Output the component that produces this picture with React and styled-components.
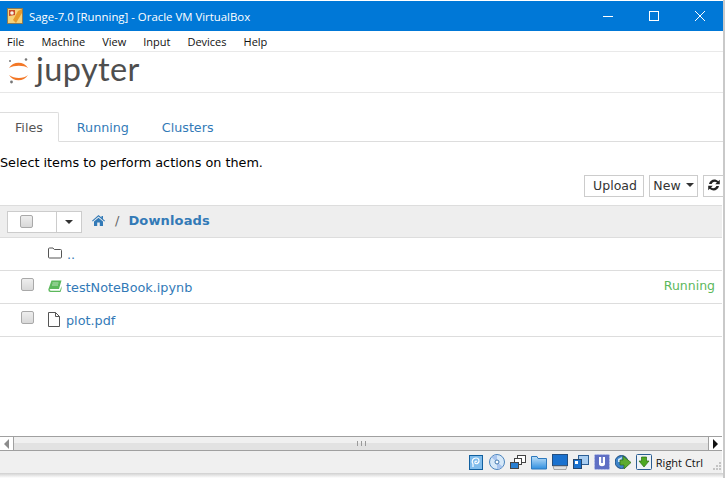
import React from 'react';
import styled, { createGlobalStyle } from 'styled-components';

const GlobalStyle = createGlobalStyle`
    html, body {
        margin: 0;
        padding: 0;
        background: #fff;
        overflow: hidden;
    }
    * {
        box-sizing: border-box;
    }
`

const Window = styled.div`
    width: 725px;
    height: 478px;
    display: flex;
    flex-direction: column;
    padding-top: 1px;
    background: #fff;
    font-family: "DejaVu Sans", sans-serif;
    border-right: 2px solid #c9c9c9;
`

const TitleBar = styled.div`
    height: 30px;
    flex: none;
    display: flex;
    align-items: center;
    background: #0078d7;
    color: #fff;
    font-family: "Open Sans", sans-serif;
    font-size: 11.4px;
    padding-left: 7px;
`

const TitleText = styled.span`
    margin-left: 6px;
    flex: 1;
`

const WinButton = styled.div`
    width: 46px;
    height: 30px;
    display: flex;
    align-items: center;
    justify-content: center;
`

const MenuBar = styled.div`
    height: 21px;
    flex: none;
    display: flex;
    align-items: center;
    gap: 17px;
    padding-left: 7px;
    font-family: "Open Sans", sans-serif;
    font-size: 11px;
    color: #111;
    border-bottom: 1px solid #e9e9e9;
`

const Logo = styled.div`
    height: 41px;
    flex: none;
    display: flex;
    align-items: center;
    padding-left: 8px;
    border-bottom: 1px solid #e7e7e7;
`

const LogoText = styled.span`
    font-family: "Lato", sans-serif;
    font-size: 32.5px;
    color: #4e4e4e;
    margin-left: 5px;
    position: relative;
    top: -4px;
    letter-spacing: 0.4px;
`

const Tabs = styled.div`
    margin-top: 19px;
    height: 30px;
    flex: none;
    display: flex;
    border-bottom: 1px solid #ddd;
    font-size: 12.7px;
`

const Tab = styled.div`
    height: 30px;
    display: flex;
    align-items: center;
    padding: ${p => p.$active ? '0 15px' : '0 16px 0 17px'};
    margin-right: ${p => p.$active ? '1px' : '0'};
    color: ${p => p.$active ? '#555' : '#337ab7'};
    ${p => p.$active && `
        background: #fff;
        border: 1px solid #ddd;
        border-left: none;
        border-bottom-color: #fff;
        border-radius: 0 2px 0 0;
    `}
`

const Hint = styled.div`
    margin-top: 12px;
    height: 17px;
    line-height: 17px;
    font-size: 12.8px;
    color: #000;
    flex: none;
`

const Toolbar = styled.div`
    margin: 4px -1px 0 0;
    height: 22px;
    flex: none;
    display: flex;
    justify-content: flex-end;
    gap: 5px;
`

const Button = styled.div`
    height: 22px;
    display: flex;
    align-items: center;
    justify-content: center;
    width: ${p => p.$w}px;
    padding: 0 0 2px ${p => p.$inset || 0}px;
    border: 1px solid #ccc;
    background: #fff;
    color: #333;
    font-size: 12.5px;
    gap: 5px;
`

const FileList = styled.div`
    margin: 8px 1px 0 0;
    flex: none;
    border-top: 1px solid #ddd;
`

const ListHeader = styled.div`
    height: 32px;
    display: flex;
    align-items: center;
    background: #eee;
    border-bottom: 1px solid #ddd;
    padding-left: 7px;
    font-size: 13px;
`

const SelectGroup = styled.div`
    width: 75px;
    height: 22px;
    display: flex;
    background: #fff;
    border: 1px solid #ccc;
`

const SelectMain = styled.div`
    width: 49px;
    display: flex;
    align-items: center;
    padding-left: 12px;
    border-right: 1px solid #ccc;
`

const SelectCaret = styled.div`
    flex: 1;
    display: flex;
    align-items: center;
    justify-content: center;
`

const Caret = styled.span`
    width: 0;
    height: 0;
    border-left: 4px solid transparent;
    border-right: 4px solid transparent;
    border-top: 4px solid #333;
`

const Check = styled.span`
    width: 13px;
    height: 13px;
    flex: none;
    border-radius: 2px;
    border: 1px solid #a9a9a9;
    background: linear-gradient(#eeeeee, #d8d8d8);
`

const Crumbs = styled.div`
    display: flex;
    align-items: center;
    margin-left: 10px;
    padding-bottom: 2px;
    color: #777;
`

const Separator = styled.span`
    margin: 0 9px 0 10px;
    color: #666;
`

const CrumbLink = styled.span`
    color: #337ab7;
    font-weight: bold;
    letter-spacing: 0.15px;
`

const Row = styled.div`
    height: 33px;
    display: flex;
    align-items: center;
    padding: 0 7px 0 21px;
    border-bottom: 1px solid #ddd;
    font-size: 12.8px;
    color: #337ab7;
`

const CheckSlot = styled.div`
    width: 27px;
    flex: none;
    display: flex;
    margin-top: -6px;
`

const IconSlot = styled.div`
    width: 18px;
    flex: none;
    display: flex;
    margin-top: -2px;
`

const FileName = styled.span`
    flex: 1;
    margin-top: 1px;
    margin-left: ${p => p.$parent ? '1px' : '0'};
`

const Status = styled.span`
    color: #5cb85c;
    font-size: 12.5px;
    margin-top: -3px;
`

const Filler = styled.div`
    flex: 1;
`

const Scrollbar = styled.div`
    height: 15px;
    flex: none;
    display: flex;
    margin-right: 1px;
    border-top: 1px solid #a0a0a0;
    border-bottom: 1px solid #a0a0a0;
    background: linear-gradient(#f0f0f0 50%, #e2e2e2 50%);
`

const ScrollEnd = styled.div`
    width: 14px;
    flex: none;
    display: flex;
    align-items: center;
    justify-content: center;
    background: #fff;
    border-${p => p.$side}: 1px solid #a0a0a0;
`

const Arrow = styled.span`
    width: 0;
    height: 0;
    border-top: 5px solid transparent;
    border-bottom: 5px solid transparent;
    ${p => p.$left ? 'border-right: 5px solid #8c8c8c;' : 'border-left: 5px solid #111;'}
`

const ScrollTrack = styled.div`
    flex: 1;
    display: flex;
    align-items: center;
    justify-content: center;
    gap: 3px;
`

const Grip = styled.span`
    width: 1px;
    height: 5px;
    background: #9a9a9a;
`

const StatusBar = styled.div`
    height: 22px;
    flex: none;
    display: flex;
    align-items: center;
    justify-content: flex-end;
    gap: 5px;
    padding-right: 1px;
    margin-right: 1px;
    background: #f0f0f0;
    font-family: "Open Sans", sans-serif;
    font-size: 11px;
    color: #111;
`

const HostKey = styled.span`
    margin-left: -1px;
`

const GripSlot = styled.div`
    margin: 6px 0 0 4px;
    display: flex;
`

const Shadow = styled.div`
    height: 5px;
    flex: none;
    background: linear-gradient(#cfcfcf, #fff);
`

const VboxLogo = () => (
    <svg width="16" height="16" viewBox="0 0 16 16">
        <rect x="0.5" y="0.5" width="15" height="15" fill="#f5d27a" stroke="#8a7a55" />
        <path d="M9 15 L15 5 L15 1 L11 3 L6 12Z" fill="#e79a2c" />
        <path d="M2 2 L8 2 L8 7 L2 8Z" fill="#c94a2a" />
        <circle cx="5" cy="5" r="1.8" fill="#f4f1ea" />
    </svg>
)

const JupyterMark = () => (
    <svg width="23" height="30" viewBox="0 0 23 30">
        <path d="M1 11 C5 4 16 4 20 11 C16 8 6 8 1 11Z" fill="#f37726" />
        <path d="M1 18 C5 25 16 25 20 18 C16 22 6 22 1 18Z" fill="#f37726" />
        <circle cx="18" cy="2.500" r="1.300" fill="#777" />
        <circle cx="2" cy="4" r="1" fill="#777" />
        <circle cx="3.500" cy="25" r="1.400" fill="#777" />
    </svg>
)

const HomeIcon = () => (
    <svg width="13" height="11" viewBox="0 0 13 11">
        <path d="M6.500 0 L9.500 2.600 V1 H11 V3.900 L13 5.700 L12.300 6.400 L6.500 1.500 L0.700 6.400 L0 5.700Z M2 6.500 L6.500 2.700 L11 6.500 V11 H7.800 V7.500 H5.200 V11 H2Z" fill="#337ab7" />
    </svg>
)

const FolderIcon = () => (
    <svg width="14" height="12" viewBox="0 0 14 12">
        <path d="M1.500 1 H5 L6.300 2.500 H12.500 Q13.500 2.500 13.500 3.500 V10 Q13.500 11 12.500 11 H1.500 Q0.500 11 0.500 10 V2 Q0.500 1 1.500 1Z" fill="none" stroke="#555" />
    </svg>
)

const BookIcon = () => (
    <svg width="14" height="12" viewBox="0 0 14 12">
        <path d="M3.500 0.500 H13.500 L11 9 H2.500 Q1.500 9 1.700 10 Q2 10.800 3 10.800 H12 L13.500 6 V9 L12.500 12 H2.500 Q0.300 12 0.300 9.500Z" fill="#5cb85c" />
        <path d="M4.500 3 H10.500 M4 5 H10" stroke="#d4edd4" strokeWidth="0.8" />
    </svg>
)

const PageIcon = () => (
    <svg width="12" height="15" viewBox="0 0 12 15">
        <path d="M0.500 0.500 H7.500 L11.500 4.500 V14.500 H0.500Z M7.500 0.500 V4.500 H11.500" fill="none" stroke="#555" />
    </svg>
)

const RefreshIcon = () => (
    <svg width="12" height="12" viewBox="0 0 11 11">
        <path d="M10.800 0.600 V4.800 H6.600 L8.200 3.200 C6.800 1.900 4.300 2.300 3.300 4.500 H0.900 C1.900 0.400 6.500 -0.900 9.400 2Z" fill="#222" />
        <path d="M0.200 10.400 V6.200 H4.400 L2.800 7.800 C4.200 9.100 6.700 8.700 7.700 6.500 H10.100 C9.100 10.600 4.500 11.900 1.600 9Z" fill="#222" />
    </svg>
)

const HddIcon = () => (
    <svg width="16" height="16" viewBox="0 0 16 16">
        <rect x="1.500" y="1.500" width="13" height="14" fill="#7fbcec" stroke="#12609f" />
        <path d="M5 13 V10 C3 7 5 4 8 4 C11 4 12 7 10 9 C9 10 7.500 10 7 9 C6.500 7.500 8 6.500 9 7.500" fill="none" stroke="#fff" strokeWidth="1.200" />
    </svg>
)

const CdIcon = () => (
    <svg width="16" height="16" viewBox="0 0 16 16">
        <circle cx="8" cy="8" r="7.500" fill="#d6e8f8" stroke="#4b84bd" />
        <path d="M8 8 L2.500 3.500 A7 7 0 0 1 8 1Z M8 8 L13.500 12.500 A7 7 0 0 1 8 15Z" fill="#a8c4ee" />
        <circle cx="8" cy="8" r="2" fill="#fff" stroke="#3f76ae" />
    </svg>
)

const NetIcon = () => (
    <svg width="16" height="16" viewBox="0 0 16 16">
        <rect x="7.500" y="1.500" width="8" height="7" fill="#fff" stroke="#444" />
        <rect x="4.500" y="4.500" width="7" height="6" fill="#fff" stroke="#444" />
        <rect x="0.500" y="8.500" width="8" height="6" fill="#2a7fd0" stroke="#444" />
    </svg>
)

const SharedIcon = () => (
    <svg width="16" height="16" viewBox="0 0 16 16">
        <defs>
            <linearGradient id="folderFill" x1="0" y1="0" x2="0" y2="1">
                <stop offset="0" stopColor="#bfe0f8" />
                <stop offset="1" stopColor="#2f8fe0" />
            </linearGradient>
        </defs>
        <path d="M0.500 2.500 H6 L7 4.500 H15.500 V15 H0.500Z" fill="url(#folderFill)" stroke="#2d79bd" />
    </svg>
)

const ScreenIcon = () => (
    <svg width="16" height="16" viewBox="0 0 16 16">
        <rect x="0.500" y="0.500" width="15" height="11" fill="#1b72cf" stroke="#244f80" />
        <path d="M1 12 H15 L14 15.500 H2Z" fill="#e0e0e0" stroke="#777" strokeWidth="0.600" />
    </svg>
)

const WindowsIcon = () => (
    <svg width="16" height="16" viewBox="0 0 16 16">
        <rect x="5.500" y="1.500" width="10" height="9" fill="#a9cdf0" stroke="#2c5f96" />
        <rect x="0.500" y="5.500" width="8" height="9" fill="#1b72cf" stroke="#23466e" />
        <rect x="2" y="7" width="3" height="3" fill="#fff" />
    </svg>
)

const ChipIcon = () => (
    <svg width="16" height="16" viewBox="0 0 16 16">
        <rect x="0.500" y="0.500" width="15" height="15" rx="1" fill="#5f6fc4" stroke="#b9c2ea" strokeDasharray="2 1" />
        <path d="M5 3 V10 C5 13 11 13 11 10 V3Z" fill="#fff" />
        <rect x="7.200" y="3" width="1.600" height="6" fill="#5f6fc4" />
    </svg>
)

const GlobeIcon = () => (
    <svg width="16" height="16" viewBox="0 0 16 16">
        <circle cx="6.500" cy="8" r="6.500" fill="#3e83c9" stroke="#1c4d80" />
        <path d="M3 5 L7 3 L6 8 L3 8Z" fill="#cfe6f7" />
        <path d="M8 2 L16 8.500 L9 15 L9 11 L5 11 L5 6 L8 6Z" fill="#5cab2e" stroke="#2b6a14" strokeWidth="0.700" />
    </svg>
)

const DownloadIcon = () => (
    <svg width="16" height="16" viewBox="0 0 16 16">
        <rect x="0.500" y="0.500" width="15" height="15" rx="1" fill="#eef3f7" stroke="#2b5d91" />
        <path d="M5.500 3 H10.500 V7 H13 L8 13 L3 7 H5.500Z" fill="#4ea823" stroke="#2e6e12" strokeWidth="0.700" />
    </svg>
)

const ResizeGrip = () => (
    <svg width="9" height="9" viewBox="0 0 9 9">
        <path d="M7 1 H9 V3 H7Z M4 4 H6 V6 H4Z M7 4 H9 V6 H7Z M1 7 H3 V9 H1Z M4 7 H6 V9 H4Z M7 7 H9 V9 H7Z" fill="#c4c4c4" />
    </svg>
)

function App() {
    return (
        <Window>
            <GlobalStyle />
            <TitleBar>
                <VboxLogo />
                <TitleText>Sage-7.0 [Running] - Oracle VM VirtualBox</TitleText>
                <WinButton>
                    <svg width="10" height="10" viewBox="0 0 10 10"><path d="M0 5.500 H10" stroke="#fff" /></svg>
                </WinButton>
                <WinButton>
                    <svg width="10" height="10" viewBox="0 0 10 10"><rect x="0.500" y="0.500" width="9" height="9" fill="none" stroke="#fff" /></svg>
                </WinButton>
                <WinButton>
                    <svg width="10" height="10" viewBox="0 0 10 10"><path d="M0 0 L10 10 M10 0 L0 10" stroke="#fff" /></svg>
                </WinButton>
            </TitleBar>
            <MenuBar>
                <span>File</span>
                <span>Machine</span>
                <span>View</span>
                <span>Input</span>
                <span>Devices</span>
                <span>Help</span>
            </MenuBar>
            <Logo>
                <JupyterMark />
                <LogoText>jupyter</LogoText>
            </Logo>
            <Tabs>
                <Tab $active>Files</Tab>
                <Tab>Running</Tab>
                <Tab>Clusters</Tab>
            </Tabs>
            <Hint>Select items to perform actions on them.</Hint>
            <Toolbar>
                <Button $w={60} $inset={2}>Upload</Button>
                <Button $w={49}>New <Caret /></Button>
                <Button $w={21}><RefreshIcon /></Button>
            </Toolbar>
            <FileList>
                <ListHeader>
                    <SelectGroup>
                        <SelectMain><Check /></SelectMain>
                        <SelectCaret><Caret /></SelectCaret>
                    </SelectGroup>
                    <Crumbs>
                        <HomeIcon />
                        <Separator>/</Separator>
                        <CrumbLink>Downloads</CrumbLink>
                    </Crumbs>
                </ListHeader>
                <Row>
                    <CheckSlot />
                    <IconSlot><FolderIcon /></IconSlot>
                    <FileName $parent>..</FileName>
                </Row>
                <Row>
                    <CheckSlot><Check /></CheckSlot>
                    <IconSlot><BookIcon /></IconSlot>
                    <FileName>testNoteBook.ipynb</FileName>
                    <Status>Running</Status>
                </Row>
                <Row>
                    <CheckSlot><Check /></CheckSlot>
                    <IconSlot><PageIcon /></IconSlot>
                    <FileName>plot.pdf</FileName>
                </Row>
            </FileList>
            <Filler />
            <Scrollbar>
                <ScrollEnd $side="right"><Arrow $left /></ScrollEnd>
                <ScrollTrack><Grip /><Grip /><Grip /></ScrollTrack>
                <ScrollEnd $side="left"><Arrow /></ScrollEnd>
            </Scrollbar>
            <StatusBar>
                <HddIcon />
                <CdIcon />
                <NetIcon />
                <SharedIcon />
                <ScreenIcon />
                <WindowsIcon />
                <ChipIcon />
                <GlobeIcon />
                <DownloadIcon />
                <HostKey>Right Ctrl</HostKey>
                <GripSlot><ResizeGrip /></GripSlot>
            </StatusBar>
            <Shadow />
        </Window>
    )
}

export default App
